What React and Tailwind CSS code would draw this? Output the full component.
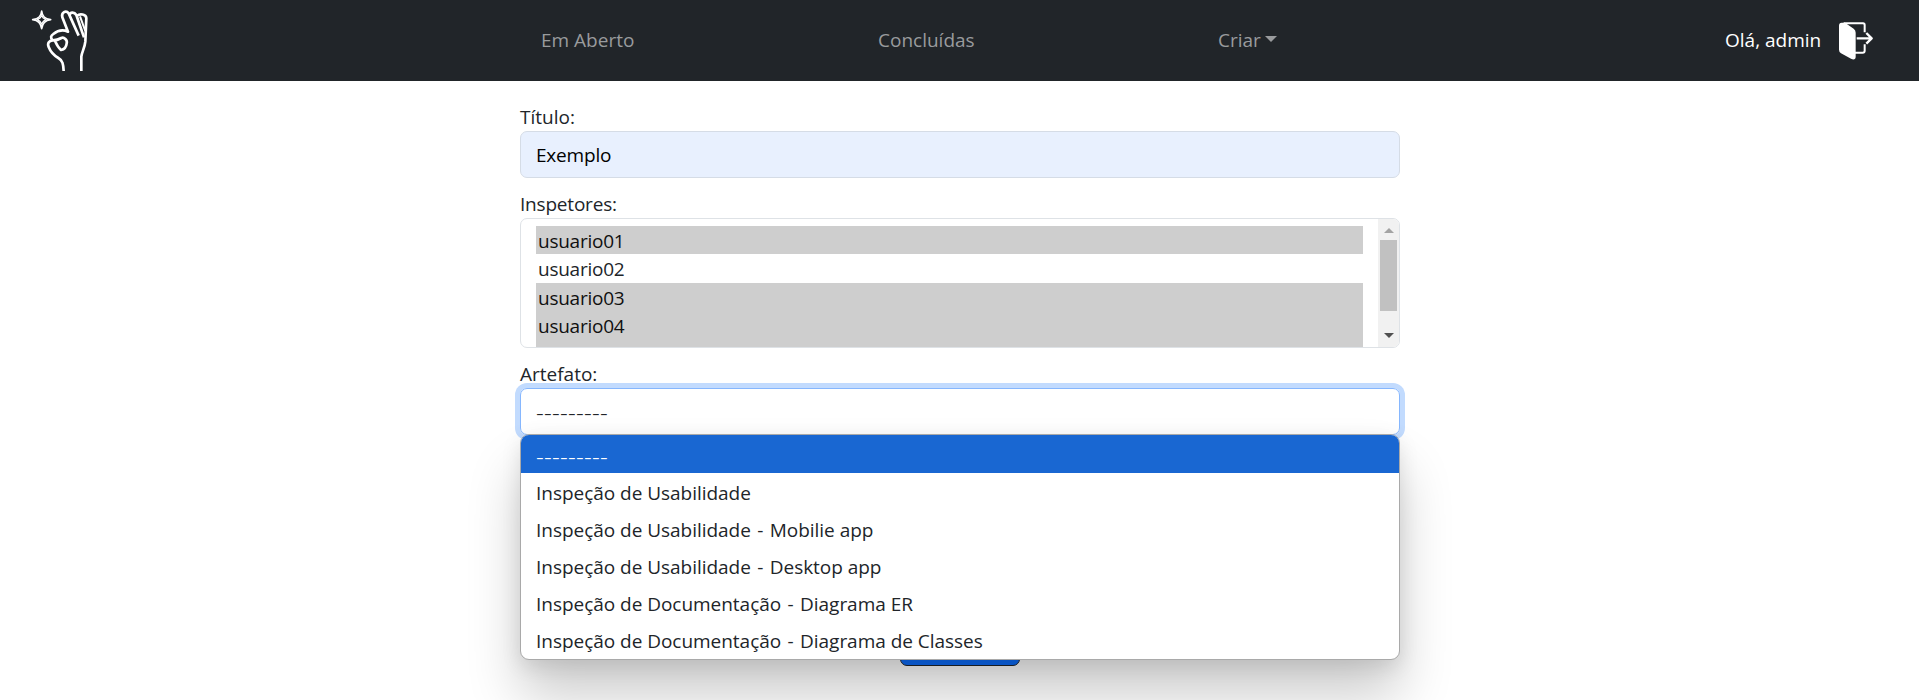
const inspectors = [
  { name: "usuario01", row: "h-[28.4px] bg-[#cecece] leading-[30px] text-[#101010]" },
  { name: "usuario02", row: "h-[28.4px] leading-[30px]" },
  { name: "usuario03", row: "h-[28.4px] bg-[#cecece] leading-[30px] text-[#101010]" },
  { name: "usuario04", row: "h-[28.4px] bg-[#cecece] leading-[30px] text-[#101010]" },
  { name: "usuario05", row: "h-[28.4px] bg-[#cecece] leading-[26px] text-[#101010]" },
];

const artifacts = [
  ["Inspeção de Usabilidade"],
  ["Inspeção de Usabilidade", "Mobilie app"],
  ["Inspeção de Usabilidade", "Desktop app"],
  ["Inspeção de Documentação", "Diagrama ER"],
  ["Inspeção de Documentação", "Diagrama de Classes"],
];

function HandLogo() {
  return (
    <svg className="h-[81px] w-[130px] shrink-0" viewBox="0 0 390 243" fill="none" stroke="#fff" strokeWidth="8" strokeLinecap="butt" strokeLinejoin="round">
      <path d="M125 33 C127 50 134 57 152 59 C134 61 127 69 125 86 C123 69 116 61 98 59 C116 57 123 50 125 33 Z" strokeWidth="5" />
      <path d="M125 47 L130 54 L138 59 L130 64 L125 72 L120 64 L112 59 L120 54 Z" strokeWidth="4" />
      <path d="M191 213 C190 193 188 181 175 174 C160 165 151 154 146 141 C141 128 148 122 158 121 C168 121 176 119 184 114 C192 110 203 121 200 130 C199 141 193 148 183 150 C176 144 170 134 165 123" />
      <path d="M158 121 C150 113 153 107 160 102 C171 93 188 88 204 95 L187 52 C183 37 198 30 206 40 L236 107" />
      <path d="M209 45 C210 36 223 35 229 45 L252 112" />
      <path d="M232 47 C239 40 259 42 259 55 L256 125 C254 145 245 157 244 170 L244 213" />
      <path d="M240 49 L256 93" strokeWidth="6" />
    </svg>
  );
}

function ExitIcon() {
  return (
    <svg className="h-[38px] w-[34px] shrink-0" viewBox="0 0 102 114" fill="none" stroke="#fff" strokeWidth="6" strokeLinejoin="round">
      <path d="M14 4 H72 Q77 4 77 9 V31 M77 67 V86 Q77 92 71 92 H48" />
      <path d="M53 49 H95 M82 33 L98 49 L82 65" strokeWidth="7" />
      <path d="M0 11 Q0 2 8 2 H18 L44 20 Q50 24 50 32 V104 Q50 114 40 112 Q36 111 32 108 L6 94 Q0 90 0 83 Z" fill="#fff" stroke="none" />
    </svg>
  );
}

function Navbar() {
  return (
    <header className="flex h-[81px] items-center bg-[#212529] text-[#999b9d]">
      <HandLogo />
      <nav className="flex flex-1 items-center pb-[2px] pl-[411px] whitespace-nowrap">
        <a className="w-[337px]">Em Aberto</a>
        <a className="w-[340px]">Concluídas</a>
        <a className="flex items-center">
          Criar
          <span className="mb-px ml-[4px] border-x-[6px] border-t-[6px] border-x-transparent border-t-[#999b9d]" />
        </a>
      </nav>
      <div className="flex w-[194px] items-center text-white whitespace-nowrap">
        <span className="w-[114px] pb-[2px]">Olá, admin</span>
        <ExitIcon />
      </div>
    </header>
  );
}

function InspectorList() {
  return (
    <div className="flex h-[130px] overflow-hidden rounded-[7px] border border-[#dee2e6]">
      <ul className="flex-1 pt-[7px] pr-[15px] pl-[15px] tracking-[-0.25px]">
        {inspectors.map((i) => (
          <li key={i.name} className={i.row}>
            <span className="pl-[2px]">{i.name}</span>
          </li>
        ))}
      </ul>
      <div className="flex w-[21px] flex-col items-center bg-[#f1f1f1]">
        <div className="flex h-[21px] items-center">
          <span className="mt-[2px] border-x-[5px] border-b-[5px] border-x-transparent border-b-[#a3a3a3]" />
        </div>
        <div className="h-[71px] w-[17px] bg-[#c1c1c1]" />
        <div className="mt-auto flex h-[21px] items-center">
          <span className="mb-[2px] border-x-[5px] border-t-[5px] border-x-transparent border-t-[#505050]" />
        </div>
      </div>
    </div>
  );
}

function ArtifactMenu() {
  return (
    <ul className="absolute top-[46px] left-0 z-10 w-[880px] overflow-hidden rounded-[9px] border border-[#a9a9a9] bg-white pb-px tracking-[-0.03px] shadow-[0_36px_54px_rgba(0,0,0,0.2),0_6px_20px_rgba(0,0,0,0.1)]">
      <li className="h-[38px] bg-[#1967d2] pl-[15px] text-[24px] leading-[42px] font-light tracking-[0.27px] text-white">---------</li>
      {artifacts.map(([kind, target]) => (
        <li key={kind + target} className="h-[37px] pl-[15px] leading-[40px]">
          {kind}
          {target && <span> <span className="mx-[1.5px]">-</span> {target}</span>}
        </li>
      ))}
    </ul>
  );
}

export default function App() {
  return (
    <div className="h-[700px] w-full overflow-hidden bg-white font-['Open_Sans',sans-serif] text-[19px] leading-[30px] text-[#212529]">
      <Navbar />
      <main className="ml-[520px] w-[880px] pt-[21px]">
        <label className="block h-[29px]">Título:</label>
        <div className="h-[47px] rounded-[7px] border border-[#d5dce6] bg-[#e8f0fe] pl-[15px] leading-[47px] tracking-[-0.2px] text-black">Exemplo</div>
        <label className="mt-[11px] block h-[29px] tracking-[-0.2px]">Inspetores:</label>
        <InspectorList />
        <label className="mt-[11px] block h-[29px]">Artefato:</label>
        <div className="relative h-[47px] rounded-[7px] border border-[#86b7fe] pl-[15px] shadow-[0_0_0_5px_#c2dbfe]">
          <span className="block text-[24px] leading-[45px] font-light tracking-[0.27px]">---------</span>
          <div className="absolute -top-px -left-px">
            <ArtifactMenu />
          </div>
        </div>
        <button className="mx-auto mt-[184px] block h-[47px] w-[120px] rounded-[7px] border border-[#212529] bg-[#0d6efd] text-white" />
      </main>
    </div>
  );
}
